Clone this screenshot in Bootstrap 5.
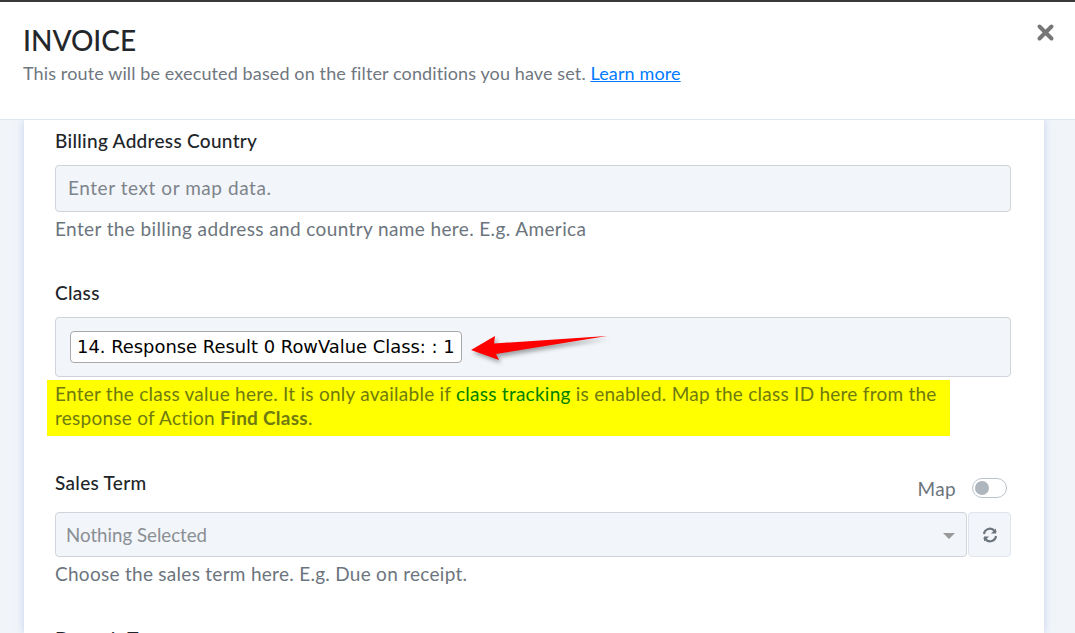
<!DOCTYPE html>
<html lang="en">
<head>
<meta charset="UTF-8">
<meta name="viewport" content="width=device-width, initial-scale=1.0">
<link href="https://cdn.jsdelivr.net/npm/bootstrap@5.3.2/dist/css/bootstrap.min.css" rel="stylesheet">
<script src="https://cdn.jsdelivr.net/npm/bootstrap@5.3.2/dist/js/bootstrap.bundle.min.js"></script>
<title>Invoice</title>
<style>
html, body { height: 633px; overflow: hidden; }
body { background: #f1f5fa; font-family: Lato, sans-serif; font-size: 19px; color: #212529; }
.top-head { height: 120px; background: #fff; border-top: 2px solid #3a3a3a; border-bottom: 1px solid #dfe5f3; padding: 19px 23px 0; position: relative; }
.top-head h1 { font-size: 28px; line-height: 38px; font-weight: 500; margin: 0; color: #23272b; }
.top-head p { font-size: 18px; line-height: 28px; margin: 0; color: #6f7780; letter-spacing: .12px; }
.top-head a { color: #007bff; }
.close-x { position: absolute; right: 20px; top: 21px; }
.form-box { width: 1020px; margin-left: 24px; height: 513px; background: #fff; box-shadow: 0 0 8px rgba(160,180,225,.55); padding: 8px 33px 0 31px; overflow: hidden; }
.fld { position: relative; }
.fld-label { font-size: 19px; line-height: 26px; letter-spacing: .3px; color: #212529; font-weight: 500; margin: 0; }
.fld-input { height: 47px; background: #f2f5f9; border: 1px solid #ced4da; border-radius: 4px; padding: 0 12px; line-height: 44px; letter-spacing: .56px; color: #7d848b; margin-top: 11px; }
.fld-help { font-size: 19px; line-height: 24px; letter-spacing: .38px; color: #6c757d; margin: 5px 0 0; }
.term-wrap .fld-help { letter-spacing: .28px; }
.map-box { height: 60px; background: #f2f5f9; border: 1px solid #ced4da; border-radius: 4px; padding: 13px 14px; margin-top: 11px; }
.map-chip { display: inline-block; height: 32px; line-height: 29px; padding: 0 6px; background: #fff; border: 1px solid #a9a9a9; border-radius: 4px; font-family: "DejaVu Sans", sans-serif; font-size: 17.9px; color: #000; white-space: nowrap; }
.high-help { background: #ff0; margin: 3px 61px 0 -8px; padding: 2px 8px 6px; font-size: 19px; line-height: 24px; letter-spacing: .25px; color: #6f7a10; }
.high-help a { color: #008000; text-decoration: none; }
.high-help b { font-weight: 700; }
.red-arrow { position: absolute; left: 415px; top: 44px; filter: drop-shadow(2px 3px 2px rgba(0,0,0,.35)); }
.map-side { margin-right: 4px; }
.map-text { color: #6c757d; font-size: 19px; line-height: 24px; letter-spacing: .38px; margin-top: 7px; }
.map-toggle { width: 35px; height: 20px; border: 1px solid #bcc3cb; border-radius: 10px; background: #fff; display: block; padding: 2px; margin-top: 8px; }
.map-toggle span { display: block; width: 14px; height: 14px; border-radius: 50%; background: #adb5bd; }
.term-row { height: 42px; }
.pick-box { height: 45px; background: #f2f5f9; border: 1px solid #ced4da; border-radius: 4px; padding: 2px 11px 0 10px; line-height: 43px; font-size: 18.7px; color: #8a8f94; }
.pick-caret { width: 0; height: 0; border-left: 6px solid transparent; border-right: 6px solid transparent; border-top: 6px solid #999; }
.spin-btn { width: 43px; height: 45px; background: #f2f5f9; border: 1px solid #e0e5ec; border-radius: 4px; margin-left: 1px; }
.deposit-wrap { margin-top: 40px; }
.class-wrap { margin-top: 39px; }
.term-wrap { margin-top: 34px; }
</style>
</head>
<body>
<div class="top-head">
  <h1>INVOICE</h1>
  <p>This route will be executed based on the filter conditions you have set. <a href="#">Learn more</a></p>
  <svg class="close-x" width="19" height="19" viewBox="0 0 19 19"><path d="M3.5 3.5 15.5 15.5M15.5 3.5 3.5 15.5" stroke="#777" stroke-width="4" stroke-linecap="round"/></svg>
</div>
<div class="form-box">
  <div class="fld">
    <p class="fld-label">Billing Address Country</p>
    <div class="fld-input">Enter text or map data.</div>
    <p class="fld-help">Enter the billing address and country name here. E.g. America</p>
  </div>
  <div class="fld class-wrap">
    <p class="fld-label">Class</p>
    <div class="map-box"><span class="map-chip">14. Response Result 0 RowValue Class: : 1</span></div>
    <svg class="red-arrow" width="145" height="42" viewBox="0 0 145 42"><path d="M1 26 25 12 24 19.5 137 12 26 30 29 36Z" fill="#f00"/></svg>
    <div class="high-help">Enter the class value here. It is only available if <a href="#">class tracking</a> is enabled. Map the class ID here from the response of Action <b>Find Class</b>.</div>
  </div>
  <div class="fld term-wrap">
    <div class="d-flex justify-content-between term-row">
      <p class="fld-label">Sales Term</p>
      <div class="d-flex align-items-start gap-3 map-side"><span class="map-text">Map</span><span class="map-toggle"><span></span></span></div>
    </div>
    <div class="d-flex">
      <div class="pick-box flex-grow-1 d-flex justify-content-between align-items-center"><span>Nothing Selected</span><span class="pick-caret"></span></div>
      <div class="spin-btn d-flex align-items-center justify-content-center">
        <svg width="16" height="16" viewBox="0 0 16 16" fill="none" stroke="#6c757d" stroke-width="2.2"><path d="M2 7a6 6 0 0 1 10.5-3.2L14 5.5"/><path d="M14 1.5v5h-5" fill="#6c757d" stroke="none"/><path d="M14 9a6 6 0 0 1-10.5 3.2L2 10.5"/><path d="M2 14.5v-5h5" fill="#6c757d" stroke="none"/></svg>
      </div>
    </div>
    <p class="fld-help">Choose the sales term here. E.g. Due on receipt.</p>
  </div>
  <div class="fld deposit-wrap">
    <p class="fld-label">Deposit To</p>
  </div>
</div>
</body>
</html>
